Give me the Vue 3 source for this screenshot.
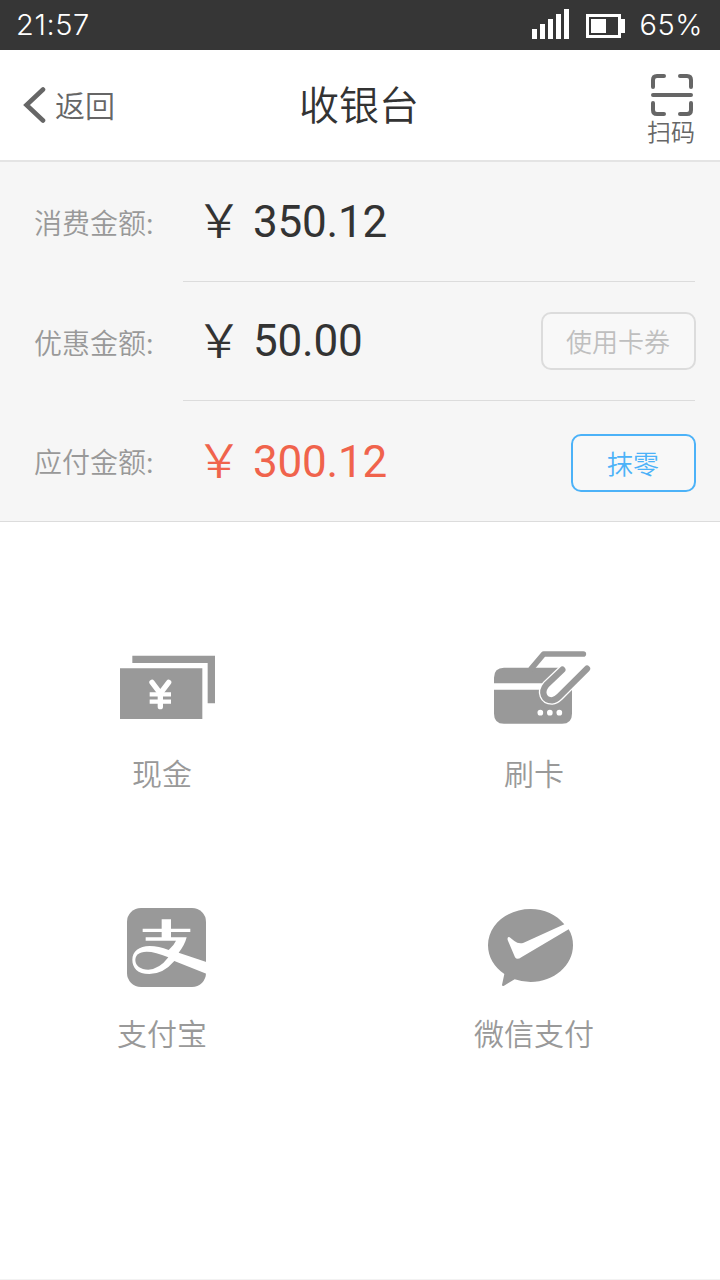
<template>
  <div class="cashier">
    <!-- 状态栏 -->
    <div class="status-bar">
      <span class="status-text">{{ time }}</span>
      <div class="status-right">
        <svg class="signal" width="38" height="30" viewBox="0 0 38 30" fill="#fff">
          <rect
            v-for="n in 5"
            :key="n"
            :x="(n - 1) * 8"
            :y="25 - n * 5"
            width="5"
            :height="n * 5 + 5"
          />
        </svg>
        <svg class="battery" width="39" height="24" viewBox="0 0 39 24">
          <rect x="1.5" y="1.5" width="32" height="21" fill="none" stroke="#fff" stroke-width="3" />
          <rect x="5" y="5" width="15" height="14" fill="#fff" />
          <rect x="35" y="5" width="4" height="14" fill="#fff" />
        </svg>
        <span class="status-text">{{ battery }}%</span>
      </div>
    </div>

    <!-- 标题栏 -->
    <header class="nav-bar">
      <button class="back-btn">
        <svg width="24" height="40" viewBox="0 0 24 40" fill="none" stroke="#666" stroke-width="4.6">
          <path d="M21 4.500 4.500 20 21 35.500" stroke-linecap="round" />
        </svg>
        <span>返回</span>
      </button>
      <h1 class="nav-title">收银台</h1>
      <button class="scan-btn">
        <svg width="42" height="42" viewBox="0 0 42 42" fill="none" stroke="#666" stroke-width="4" stroke-linecap="round">
          <path d="M2 13V6Q2 2 6 2H13M29 2H36Q40 2 40 6V13M40 29V36Q40 40 36 40H29M13 40H6Q2 40 2 36V29M2 21H40" />
        </svg>
        <span>扫码</span>
      </button>
    </header>

    <!-- 金额 -->
    <section class="amounts">
      <div v-for="row in rows" :key="row.label" class="amount-row">
        <span class="amount-label">{{ row.label }}:</span>
        <div class="amount-body" :class="{ due: row.due }">
          <span class="yen">￥</span>
          <span class="amount-value">{{ row.value }}</span>
          <button v-if="row.action" class="action-btn" :class="row.actionType">
            {{ row.action }}
          </button>
        </div>
      </div>
    </section>

    <!-- 支付方式 -->
    <section class="methods">
      <button class="method">
        <svg class="method-icon" viewBox="6 15 360 270" fill="#999">
          <path d="M97 47H345V190H323V69H97Z" />
          <path d="M60 85H307V237H60Z" />
          <path d="M156 127 181 160 206 127M181 160V200" fill="none" stroke="#fff" stroke-width="16" stroke-linecap="round" />
          <path d="M149 163H213M149 185H213" fill="none" stroke="#fff" stroke-width="13" />
        </svg>
        <span>现金</span>
      </button>
      <button class="method">
        <svg class="method-icon" viewBox="12 15 360 270" fill="#999">
          <path d="M102 83H278L306 150V221Q306 251 276 251H102Q72 251 72 221V113Q72 83 102 83Z" />
          <path d="M72 130H225V149H72Z" fill="#fff" />
          <path d="M184 86 221 42H340" fill="none" stroke="#999" stroke-width="17" stroke-linecap="round" stroke-linejoin="round" />
          <path d="M277 89 229 135C211 157 222 181 246 181Q257 180 268 169L351 86" fill="#fff" stroke="#fff" stroke-width="27" stroke-linecap="round" />
          <path d="M277 89 229 135C211 157 222 181 246 181Q257 180 268 169L351 86" fill="none" stroke="#999" stroke-width="19" stroke-linecap="round" />
          <g fill="#fff">
            <circle cx="211" cy="218" r="8.500" />
            <circle cx="239.500" cy="218" r="8.500" />
            <circle cx="268" cy="218" r="8.500" />
          </g>
        </svg>
        <span>刷卡</span>
      </button>
      <button class="method">
        <svg class="method-icon" viewBox="6 45 360 270" fill="#999">
          <rect x="81" y="54" width="237" height="237" rx="42" />
          <path d="M185 88H213V116H271V126H213V142H260Q254 166 236 188L319 216V251L223 213Q190 252 148 252C112 252 97 233 97 209C97 184 117 168 149 168Q176 168 206 180Q222 166 228 152H137V142H185V126H128V116H185Z" fill="#fff" />
          <path d="M205 202Q166 185 140 185C116 185 106 196 106 210C106 227 121 239 145 239Q178 238 205 202Z" />
        </svg>
        <span>支付宝</span>
      </button>
      <button class="method">
        <svg class="method-icon" viewBox="42 45 360 270" fill="#999">
          <path d="M313 103C290 74 252 57 212 57C141 57 84 105 84 166C84 201 103 232 133 252L126 285Q127 290 132 287L164 268Q187 276 212 276C282 276 339 227 339 166Q339 139 326 118L184 202Q171 211 165 202L143 150Q141 139 149 142L163 153Q176 163 191 158Z" />
        </svg>
        <span>微信支付</span>
      </button>
    </section>
  </div>
</template>

<script setup>
import { ref } from 'vue'

const time = ref('21:57')
const battery = ref(65)

const rows = ref([
  { label: '消费金额', value: '350.12' },
  { label: '优惠金额', value: '50.00', action: '使用卡券', actionType: 'coupon' },
  { label: '应付金额', value: '300.12', action: '抹零', actionType: 'round', due: true }
])
</script>

<style>
body {
  margin: 0;
  background: #fff;
}
</style>

<style scoped>
.cashier {
  box-sizing: border-box;
  width: 720px;
  height: 1280px;
  border-bottom: 1px solid #f2f2f2;
  background: #fff;
  font-family: 'Noto Sans CJK SC', sans-serif;
  font-weight: 350;
  overflow: hidden;
}

button {
  padding: 0;
  border: none;
  background: none;
  font: inherit;
  cursor: pointer;
}

svg {
  display: block;
}

.status-bar {
  display: flex;
  align-items: center;
  justify-content: space-between;
  height: 50px;
  padding: 0 17px 0 16px;
  box-sizing: border-box;
  background: #363636;
  color: #fff;
}

.status-text {
  font-family: Inter, 'Liberation Sans', sans-serif;
  font-size: 29px;
  font-weight: 300;
  line-height: 50px;
  letter-spacing: 0.6px;
}

.status-right {
  display: flex;
  align-items: center;
}

.signal {
  margin: 0 16px 2px 0;
}

.battery {
  margin: 2px 14px 0 0;
}

.nav-bar {
  display: grid;
  grid-template-columns: 1fr auto 1fr;
  align-items: center;
  box-sizing: border-box;
  height: 112px;
  padding: 0 25px 0 22px;
  border-bottom: 2px solid #e4e4e4;
}

.back-btn {
  display: flex;
  align-items: center;
  gap: 9px;
  color: #666;
  font-size: 30px;
}

.back-btn span {
  padding-bottom: 3px;
}

.nav-title {
  margin: 0;
  padding: 0 0 4px 1px;
  color: #333;
  font-size: 40px;
  font-weight: 350;
}

.scan-btn {
  display: flex;
  flex-direction: column;
  align-items: center;
  justify-self: end;
  padding-top: 10px;
  color: #666;
  font-size: 24px;
  line-height: 30px;
}

.scan-btn svg {
  margin-left: 2px;
}

.amounts {
  border-bottom: 1px solid #dcdcdc;
  background: #f6f6f6;
}

.amount-row {
  display: flex;
  height: 119.67px;
  padding: 0 25px 0 34px;
}

.amount-label {
  width: 149px;
  color: #999;
  font-size: 28px;
  line-height: 121px;
}

.amount-body {
  display: flex;
  flex: 1;
  align-items: center;
  border-bottom: 1px solid #dcdcdc;
  color: #333;
}

.amount-row:last-child .amount-body {
  border-bottom: none;
}

.amount-body.due {
  color: #f0634c;
}

.yen {
  box-sizing: border-box;
  width: 70px;
  padding: 0 0 8px 13px;
  font-size: 46px;
  line-height: 110px;
}

.amount-value {
  padding-top: 1px;
  font-family: Roboto, sans-serif;
  font-size: 44px;
  font-weight: 400;
  letter-spacing: -0.2px;
}

.action-btn {
  box-sizing: border-box;
  height: 58px;
  margin: 0 -1px 0 auto;
  padding: 0 1px 1px 0;
  border: 2px solid;
  border-radius: 10px;
  font-size: 26px;
}

.coupon {
  width: 155px;
  border-color: #dcdcdc;
  background: #f8f8f8;
  color: #bfbfbf;
}

.round {
  width: 125px;
  margin-top: 4px;
  border-color: #4cb2f8;
  background: #f8f8f8;
  color: #4cb2f8;
}

.methods {
  display: grid;
  grid-template-columns: 200px 200px;
  grid-auto-rows: 260px;
  column-gap: 172px;
  padding: 123px 0 0 62px;
}

.method {
  display: flex;
  flex-direction: column;
  align-items: center;
  color: #999;
  font-size: 30px;
  line-height: 40px;
}

.method-icon {
  width: 120px;
  height: 90px;
  margin-bottom: 17px;
}
</style>
